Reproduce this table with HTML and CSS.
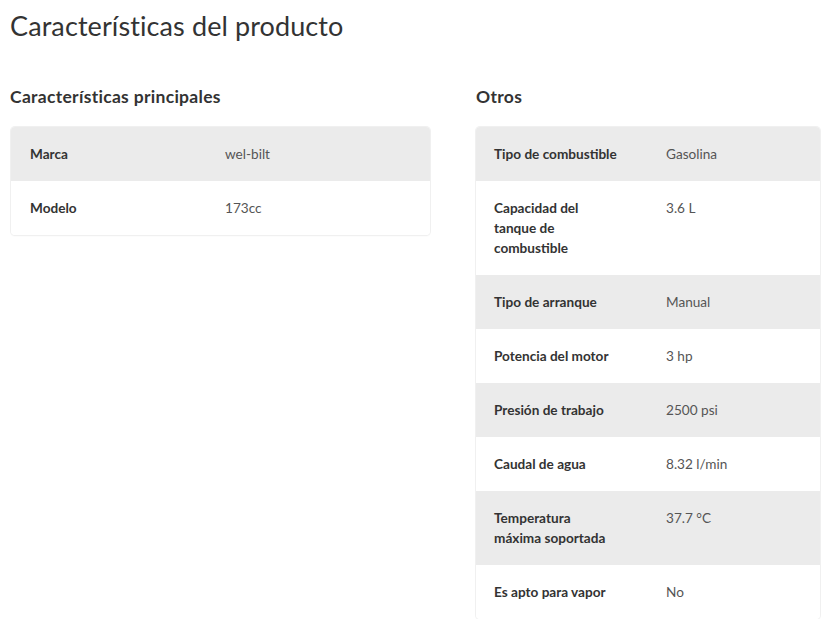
FILE: index.html
```html
<!DOCTYPE html>
<html lang="es">
<head>
<meta charset="utf-8">
<link rel="stylesheet" href="styles.css">
</head>
<body>
<main class="page">
  <h1 class="title">Características del producto</h1>
  <div class="columns">
    <section class="group group-main">
      <h2 class="group-title">Características principales</h2>
      <div class="table">
        <div class="row shade"><div class="label">Marca</div><div class="value">wel-bilt</div></div>
        <div class="row"><div class="label">Modelo</div><div class="value">173cc</div></div>
      </div>
    </section>
    <section class="group group-other">
      <h2 class="group-title">Otros</h2>
      <div class="table">
        <div class="row shade"><div class="label">Tipo de combustible</div><div class="value">Gasolina</div></div>
        <div class="row"><div class="label">Capacidad del tanque de combustible</div><div class="value">3.6 L</div></div>
        <div class="row shade"><div class="label">Tipo de arranque</div><div class="value">Manual</div></div>
        <div class="row"><div class="label">Potencia del motor</div><div class="value">3 hp</div></div>
        <div class="row shade"><div class="label">Presión de trabajo</div><div class="value">2500 psi</div></div>
        <div class="row"><div class="label">Caudal de agua</div><div class="value">8.32 l/min</div></div>
        <div class="row shade"><div class="label">Temperatura máxima soportada</div><div class="value">37.7 °C</div></div>
        <div class="row"><div class="label">Es apto para vapor</div><div class="value">No</div></div>
      </div>
    </section>
  </div>
</main>
</body>
</html>
```
FILE: styles.css
```css
* { box-sizing: border-box; }
html, body { margin: 0; padding: 0; background: #fff; }
body { font-family: Lato, "Open Sans", sans-serif; color: #333; }
.page { padding: 9px 14px 0 10px; }
.title {
  margin: 0;
  font-size: 27px;
  font-weight: 400;
  line-height: 34px;
  color: #333;
  letter-spacing: 0.1px;
}
.columns {
  display: flex;
  gap: 46px;
  margin-top: 43px;
}
.group-main { width: 420px; }
.group-other { width: 344px; }
.group-title {
  margin: 0 0 19px 0;
  font-size: 17.5px;
  font-weight: 700;
  line-height: 22px;
  color: #333;
  letter-spacing: 0.3px;
}
.group-main .table { margin-left: 1px; }
.table {
  border-radius: 4px;
  overflow: hidden;
  box-shadow: 0 0 0 1px #f0f0f0, 0 1px 2px rgba(0,0,0,0.06);
}
.row {
  display: grid;
  padding: 17px 18px;
  font-size: 13.6px;
  line-height: 20px;
  background: #fff;
}
.row.shade { background: #ebebeb; }
.group-main .row { grid-template-columns: 195px 1fr; padding-left: 19px; }
.group-other .row { grid-template-columns: 125px 1fr; column-gap: 47px; }
.label { font-weight: 700; color: #333; }
.value { color: #555; }
```
